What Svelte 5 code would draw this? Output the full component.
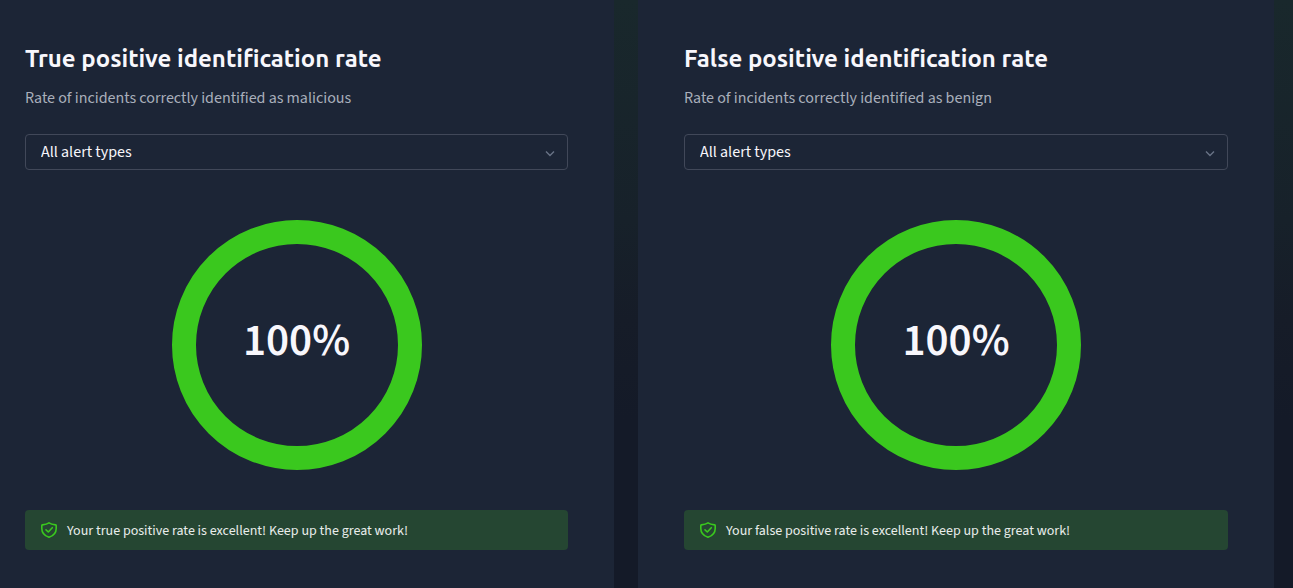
<script>
  const alertTypes = ['All alert types', 'Malware', 'Phishing', 'Network'];

  let rates = $state([
    {
      id: 'true-positive',
      title: 'True positive identification rate',
      description: 'Rate of incidents correctly identified as malicious',
      value: 100,
      filter: 'All alert types',
      message: 'Your true positive rate is excellent! Keep up the great work!'
    },
    {
      id: 'false-positive',
      title: 'False positive identification rate',
      description: 'Rate of incidents correctly identified as benign',
      value: 100,
      filter: 'All alert types',
      message: 'Your false positive rate is excellent! Keep up the great work!'
    }
  ]);
</script>

<main class="dashboard">
  {#each rates as rate (rate.id)}
    <section class="card" aria-labelledby="{rate.id}-title">
      <h2 id="{rate.id}-title">{rate.title}</h2>
      <p class="description" id="{rate.id}-description">{rate.description}</p>

      <div class="select">
        <select bind:value={rate.filter} aria-labelledby="{rate.id}-title">
          {#each alertTypes as type}
            <option value={type}>{type}</option>
          {/each}
        </select>
        <svg class="chevron" viewBox="0 0 10 6" aria-hidden="true">
          <path d="M1 .5l4 4 4-4" />
        </svg>
      </div>

      <div class="gauge">
        <svg viewBox="0 0 250 250" aria-hidden="true">
          <circle cx="125" cy="125" r="113" pathLength="100" stroke-dasharray="{rate.value} {100 - rate.value}" />
        </svg>
        <span class="value">{rate.value}%</span>
      </div>

      <p class="notice">
        <svg class="shield" viewBox="0 0 16 16" aria-hidden="true">
          <path d="M8 .8C6.200 2 3.500 2.600 1.400 2.900Q.8 3 .8 3.600V6.400C.8 11 3.800 13.800 8 15.200C12.200 13.800 15.200 11 15.200 6.400V3.600Q15.200 3 14.600 2.900C12.500 2.600 9.800 2 8 .8z" />
          <path d="M5 7.800l2.300 2.200 4-4.300" />
        </svg>
        <span>{rate.message}</span>
      </p>
    </section>
  {/each}
</main>

<style>
  :global(body) {
    background: #141a28;
  }

  .dashboard {
    display: grid;
    grid-template-columns: 307fr 318fr;
    gap: 24px;
    min-height: 100vh;
    box-sizing: border-box;
    padding-right: 19px;
    background: linear-gradient(#19282c, #17212a 220px, #161c28 320px, #141a28 420px);
    color: #f8f7fc;
    font-family: "Source Sans 3", "Source Sans Pro", "Noto Sans CJK SC", sans-serif;
  }

  .card {
    min-width: 0;
    padding: 41px 46px 38px;
    background: #1c2536;
  }

  .card:first-child {
    padding-left: 25px;
  }

  h2 {
    margin: 0;
    font: 600 24px/36px Ubuntu, "Noto Sans", sans-serif;
  }

  .description {
    margin: 9px 0 24px;
    font-size: 16px;
    line-height: 24px;
    color: #a9afbb;
  }

  .select {
    position: relative;
  }

  select {
    display: block;
    width: 100%;
    height: 36px;
    padding: 0 36px 0 15px;
    appearance: none;
    border: 1px solid #414859;
    border-radius: 4px;
    background: transparent;
    color: inherit;
    font: inherit;
    font-size: 16px;
  }

  option {
    background: #1c2536;
  }

  .chevron {
    position: absolute;
    right: 13px;
    top: 17px;
    width: 10px;
    height: 6px;
    fill: none;
    stroke: #697386;
    stroke-width: 1.4;
    pointer-events: none;
  }

  .gauge {
    display: grid;
    place-items: center;
    margin: 50px 0 40px;
  }

  .gauge > * {
    grid-area: 1 / 1;
  }

  .gauge svg {
    width: 250px;
    height: 250px;
    transform: rotate(-90deg);
  }

  .gauge circle {
    fill: none;
    stroke: #3ac81e;
    stroke-width: 24;
  }

  .value {
    padding-bottom: 8px;
    font-size: 45px;
    font-weight: 600;
    line-height: 48px;
  }

  .notice {
    display: flex;
    align-items: center;
    gap: 10px;
    min-height: 40px;
    margin: 0;
    padding: 0 16px;
    border-radius: 4px;
    background: #254632;
    color: #e9edeb;
    font-size: 14px;
    line-height: 20px;
  }

  .notice span {
    padding-top: 2px;
  }

  .shield {
    flex: none;
    width: 16px;
    height: 16px;
    fill: none;
    stroke: #3ac81e;
    stroke-width: 1.6;
    stroke-linejoin: round;
    stroke-linecap: round;
  }
</style>
